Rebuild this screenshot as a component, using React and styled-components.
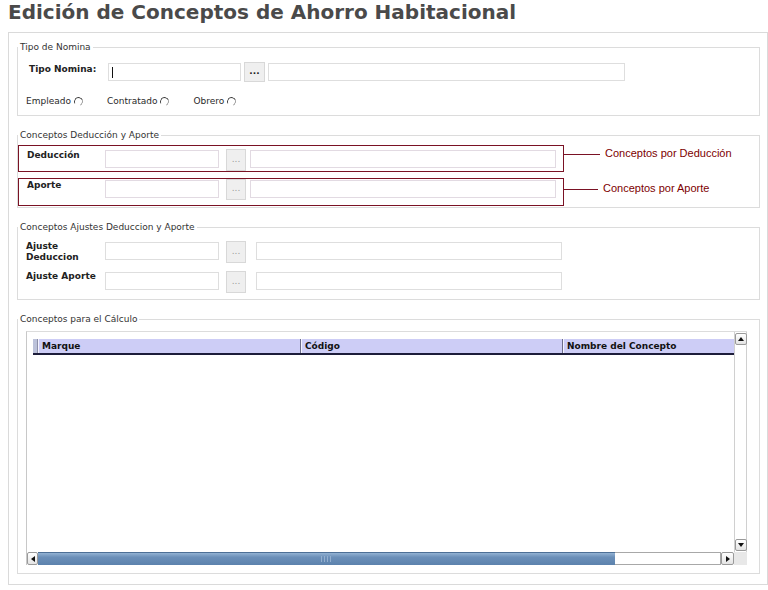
import React from "react";
import styled, { createGlobalStyle } from "styled-components";

const GlobalStyle = createGlobalStyle`
  html, body {
    margin: 0;
    padding: 0;
    background: #fff;
  }
  body {
    font-family: "DejaVu Sans", Verdana, sans-serif;
    font-size: 9px;
    color: #222;
  }
  * {
    box-sizing: border-box;
  }
`;

const Title = styled.h1`
  margin: 0;
  padding-left: 8px;
  height: 32px;
  font-size: 20px;
  line-height: 24px;
  font-weight: bold;
  color: #4a4a4a;
  white-space: nowrap;
`;

const Panel = styled.div`
  margin-left: 8px;
  width: 760px;
  border: 1px solid #dadada;
  padding: 9px 7px 10px 8px;
  display: flex;
  flex-direction: column;
  gap: 14px;
`;

const Fieldset = styled.fieldset`
  margin: 0;
  padding: 0;
  min-width: 0;
  border: 1px solid #dcdcdc;
`;

const Legend = styled.legend`
  padding: 0 2px;
  margin-left: 0;
  font-size: 9px;
  line-height: 11px;
  color: #333;
`;

const Body = styled.div`
  padding: ${(p) => p.$pad};
  display: flex;
  flex-direction: column;
  gap: ${(p) => p.$gap || 0}px;
`;

const Row = styled.div`
  display: flex;
  align-items: flex-start;
`;

const Label = styled.div`
  width: ${(p) => p.$w}px;
  flex: none;
  margin-top: ${(p) => p.$mt || 0}px;
  font-weight: bold;
  line-height: 11px;
  color: #222;
`;

const TextBox = styled.input`
  width: ${(p) => p.$w}px;
  height: 18px;
  flex: none;
  margin: ${(p) => (p.$mt ?? 1)}px 0 0 ${(p) => p.$ml || 0}px;
  padding: 0;
  border: 1px solid ${(p) => p.$tone || "#dedede"};
  background: #fff;
  font: inherit;
  outline: none;
  ${(p) =>
    p.$caret &&
    `background: #fff linear-gradient(#111, #111) no-repeat 3px 3px / 1px 11px;`}
`;

const DotsButton = styled.button`
  width: ${(p) => p.$w}px;
  height: ${(p) => p.$h}px;
  flex: none;
  margin: ${(p) => p.$mt || 0}px 0 0 ${(p) => p.$ml}px;
  padding: 0 0 2px;
  border: 1px solid #d8d8d8;
  background: #efefef;
  font-family: "DejaVu Sans", Verdana, sans-serif;
  font-size: 9px;
  font-weight: ${(p) => (p.$muted ? "normal" : "bold")};
  color: ${(p) => (p.$muted ? "#9a9a9a" : "#222")};
  line-height: 1;
`;

const RadioRow = styled.div`
  display: flex;
  align-items: center;
  gap: 24px;
  height: 12px;
  margin: 13px 0 0 -3px;
`;

const RadioItem = styled.label`
  display: flex;
  align-items: center;
  gap: 3px;
  color: #2a2a2a;
`;

const RadioMark = styled.span`
  width: 9px;
  height: 9px;
  border-radius: 50%;
  border: 1px solid;
  border-color: #3a3a3a #9a9a9a transparent #3a3a3a;
  transform: rotate(20deg);
`;

const MarkRow = styled.div`
  display: flex;
  align-items: flex-start;
`;

const MarkBox = styled.div`
  width: 546px;
  height: ${(p) => p.$h}px;
  flex: none;
  border: 1px solid #7a1224;
  padding: ${(p) => p.$pt}px 0 0 8px;
  display: flex;
  align-items: flex-start;
`;

const Connector = styled.div`
  width: ${(p) => p.$w}px;
  height: 1px;
  margin-top: ${(p) => p.$mt}px;
  background: #7a1224;
`;

const Note = styled.span`
  margin: ${(p) => p.$mt}px 0 0 5px;
  font-family: "Liberation Sans", Arial, sans-serif;
  font-size: 11px;
  line-height: 13px;
  color: #7d0000;
  white-space: nowrap;
`;

const GridFrame = styled.div`
  width: 721px;
  height: 234px;
  border-top: 1px solid #dcdcdc;
  border-left: 1px solid #c8c8c8;
  display: flex;
  flex-direction: column;
`;

const GridMain = styled.div`
  flex: 1;
  min-height: 0;
  display: flex;
`;

const GridContent = styled.div`
  flex: 1;
  padding: 7px 0 0 6px;
`;

const HeaderRow = styled.div`
  display: flex;
  height: 16px;
  background: #cdcdf6;
  border-bottom: 2px solid #1d1d3a;
`;

const HeaderStub = styled.div`
  width: 5px;
  flex: none;
  background: #bcc2da;
  border-right: 1px solid #8c8fa8;
`;

const HeaderCell = styled.div`
  width: ${(p) => (p.$w ? `${p.$w}px` : "auto")};
  flex: ${(p) => (p.$w ? "none" : 1)};
  padding-left: 3px;
  border-left: 1px solid #f4f4ff;
  border-right: ${(p) => (p.$last ? "none" : "1px solid #6d6d8a")};
  font-weight: bold;
  line-height: 14px;
  color: #111;
  white-space: nowrap;
`;

const VScroll = styled.div`
  width: 13px;
  flex: none;
  display: flex;
  flex-direction: column;
  justify-content: space-between;
  padding: 1px 0;
  border-left: 1px solid #d0d0d0;
  border-right: 1px solid #d0d0d0;
  background: #fff;
`;

const ScrollBtn = styled.div`
  width: ${(p) => p.$w || 12}px;
  height: ${(p) => p.$h || 12}px;
  flex: none;
  border: 1px solid #9a9a9a;
  border-radius: 2px;
  background: linear-gradient(#ffffff, #e4e4e4);
  display: flex;
  align-items: center;
  justify-content: center;
`;

const arrows = {
  up: "border-width: 0 3px 4px; border-color: transparent transparent #111;",
  down: "border-width: 4px 3px 0; border-color: #111 transparent transparent;",
  left: "border-width: 3px 4px 3px 0; border-color: transparent #111 transparent transparent;",
  right: "border-width: 3px 0 3px 4px; border-color: transparent transparent transparent #111;",
};

const Arrow = styled.span`
  width: 0;
  height: 0;
  border-style: solid;
  ${(p) => arrows[p.$dir]}
`;

const HScroll = styled.div`
  height: 13px;
  flex: none;
  display: flex;
`;

const Thumb = styled.div`
  width: 577px;
  flex: none;
  border-top: 1px solid #4d6f96;
  background: linear-gradient(#93b2d3, #6b8fb8 35%, #5c82ad);
  display: flex;
  align-items: center;
  justify-content: center;
`;

const Grip = styled.span`
  width: 12px;
  height: 6px;
  background: repeating-linear-gradient(90deg, #93afcf 0 1px, transparent 1px 3px);
`;

const Track = styled.div`
  flex: 1;
  background: #fff;
  border: 1px solid #a8a8a8;
  border-left: none;
`;

const Corner = styled.div`
  width: 13px;
  flex: none;
  background: #e8e8e8;
`;

const Radio = ({ children }) => (
  <RadioItem>
    {children}
    <RadioMark />
  </RadioItem>
);

const PickerRow = ({ label, gap2, muted = true }) => (
  <Row>
    <Label $w={79}>{label}</Label>
    <TextBox $w={114} />
    <DotsButton $w={20} $h={22} $ml={7} $muted={muted}>...</DotsButton>
    <TextBox $w={306} $ml={gap2} />
  </Row>
);

export default function App() {
  return (
    <>
      <GlobalStyle />
      <Title>Edición de Conceptos de Ahorro Habitacional</Title>
      <Panel>
        <Fieldset>
          <Legend>Tipo de Nomina</Legend>
          <Body $pad="9px 0 8px 11px">
            <Row>
              <Label $w={79} $mt={2}>Tipo Nomina:</Label>
              <TextBox $w={133} $caret />
              <DotsButton $w={21} $h={20} $ml={3}>...</DotsButton>
              <TextBox $w={357} $ml={3} />
            </Row>
            <RadioRow>
              <Radio>Empleado</Radio>
              <Radio>Contratado</Radio>
              <Radio>Obrero</Radio>
            </RadioRow>
          </Body>
        </Fieldset>

        <Fieldset>
          <Legend>Conceptos Deducción y Aporte</Legend>
          <Body $pad="4px 0 1px 0" $gap={6}>
            <MarkRow>
              <MarkBox $h={27} $pt={3}>
                <Label $w={78} $mt={1}>Deducción</Label>
                <TextBox $w={114} $tone="#e2dae2" />
                <DotsButton $w={20} $h={22} $ml={7} $muted>...</DotsButton>
                <TextBox $w={306} $ml={4} $tone="#e2dae2" />
              </MarkBox>
              <Connector $w={36} $mt={9} />
              <Note $mt={2}>Conceptos por Deducción</Note>
            </MarkRow>
            <MarkRow>
              <MarkBox $h={28} $pt={0}>
                <Label $w={78} $mt={1}>Aporte</Label>
                <TextBox $w={114} $tone="#e2dae2" />
                <DotsButton $w={20} $h={21} $ml={7} $muted>...</DotsButton>
                <TextBox $w={306} $ml={4} $tone="#e2dae2" />
              </MarkBox>
              <Connector $w={34} $mt={11} />
              <Note $mt={4}>Conceptos por Aporte</Note>
            </MarkRow>
          </Body>
        </Fieldset>

        <Fieldset>
          <Legend>Conceptos Ajustes Deduccion y Aporte</Legend>
          <Body $pad="8px 0 6px 8px" $gap={8}>
            <PickerRow label="Ajuste Deduccion" gap2={10} />
            <PickerRow label="Ajuste Aporte" gap2={10} />
          </Body>
        </Fieldset>

        <Fieldset>
          <Legend>Conceptos para el Cálculo</Legend>
          <Body $pad="6px 12px 8px 8px">
            <GridFrame>
              <GridMain>
                <GridContent>
                  <HeaderRow>
                    <HeaderStub />
                    <HeaderCell $w={263}>Marque</HeaderCell>
                    <HeaderCell $w={262}>Código</HeaderCell>
                    <HeaderCell $last>Nombre del Concepto</HeaderCell>
                  </HeaderRow>
                </GridContent>
                <VScroll>
                  <ScrollBtn>
                    <Arrow $dir="up" />
                  </ScrollBtn>
                  <ScrollBtn>
                    <Arrow $dir="down" />
                  </ScrollBtn>
                </VScroll>
              </GridMain>
              <HScroll>
                <ScrollBtn $w={11} $h={13}>
                  <Arrow $dir="left" />
                </ScrollBtn>
                <Thumb>
                  <Grip />
                </Thumb>
                <Track />
                <ScrollBtn $w={13} $h={13}>
                  <Arrow $dir="right" />
                </ScrollBtn>
                <Corner />
              </HScroll>
            </GridFrame>
          </Body>
        </Fieldset>
      </Panel>
    </>
  );
}
